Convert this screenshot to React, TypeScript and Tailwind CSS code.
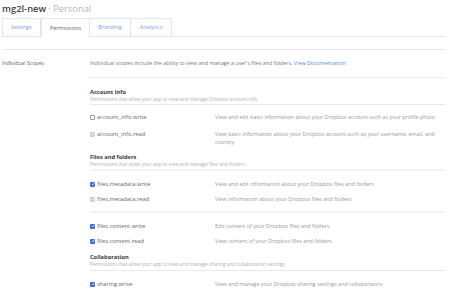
import React from "react";

type Item = { name: string; desc: string[]; state: "off" | "on" | "dis"; mt: string };

function Box({ state }: { state: "off" | "on" | "dis" }) {
  if (state === "off") {
    return <span className="mt-[1.5px] block h-[5px] w-[5px] shrink-0 rounded-[1px] border border-[#9a9a9a] bg-white" />;
  }
  const bg = state === "on" ? "bg-[#3b6fe3]" : "bg-[#cfcfcf]";
  return (
    <span className={`mt-[1.5px] flex h-[5px] w-[5px] shrink-0 items-center justify-center rounded-[1px] ${bg}`}>
      <svg width="4" height="4" viewBox="0 0 10 10">
        <path d="M2 5.2 L4.2 7.4 L8.2 2.6" stroke="white" strokeWidth="1.8" fill="none" />
      </svg>
    </span>
  );
}

function Row({ it }: { it: Item }) {
  return (
    <div className={`flex ${it.mt} leading-[8px]`}>
      <div className="flex w-[125px] shrink-0 items-start gap-[2px]">
        <Box state={it.state} />
        <span className="text-[5.8px] text-[#666]">{it.name}</span>
      </div>
      <div className="text-[5.4px] text-[#999]">
        {it.desc.map((d) => (
          <div key={d}>{d}</div>
        ))}
      </div>
    </div>
  );
}

function Heading({ title, sub, mt, border, pb }: { title: string; sub: string; mt: string; border: string; pb: string }) {
  return (
    <div className={`${mt} ${pb} ${border}`}>
      <div className="h-[7px] text-[5.7px] font-bold leading-[7px] text-[#3a3a3a]">{title}</div>
      <div className="h-[7px] text-[4.8px] leading-[7px] text-[#b0b0b0]">{sub}</div>
    </div>
  );
}

export default function App() {
  return (
    <div
      className="h-[290px] w-[450px] overflow-hidden bg-white pl-[2px] pr-[5px]"
      style={{ fontFamily: '"Open Sans", sans-serif' }}
    >
      <div className="flex h-[18px] items-center text-[9.4px] leading-none">
        <span className="font-semibold text-[#444]">mg2l-new</span>
        <span className="ml-[2px] text-[#b8b8b8]">· Personal</span>
      </div>
      <div className="flex h-[19px] border-b border-[#e8e8e8]">
        <div className="-mb-px flex w-[39px] items-center justify-center border border-[#dde6f5] text-[5.5px] text-[#7d9de2]">Settings</div>
        <div className="-mb-px flex w-[49px] items-center justify-center border-x border-t border-[#e6e6e6] bg-white text-[5.5px] text-[#666]">Permissions</div>
        <div className="-mb-px flex w-[41px] items-center justify-center border border-l-0 border-[#dde6f5] text-[5.5px] text-[#7d9de2]">Branding</div>
        <div className="-mb-px flex w-[41px] items-center justify-center border border-l-0 border-[#dde6f5] text-[5.5px] text-[#7d9de2]">Analytics</div>
      </div>
      <div className="mt-[12px] border-t border-[#e8e8e8]" />
      <div className="flex">
        <div className="flex h-[27px] w-[88px] shrink-0 items-center text-[5.2px] text-[#666]">Individual Scopes</div>
        <div className="flex-1">
          <div className="flex h-[28px] items-center border-b border-[#ececec] text-[5.35px] text-[#777]">
            <span>
              Individual scopes include the ability to view and manage a user&apos;s files and folders.{" "}
              <span className="text-[#5a84e4]">View Documentation</span>
            </span>
          </div>
          <Heading
            title="Account Info"
            sub="Permissions that allow your app to view and manage Dropbox account info"
            mt="mt-[10.5px]"
            pb="pb-[1.5px]"
            border="border-b border-[#e6e6e6]"
          />
          <Row it={{ name: "account_info.write", state: "off", mt: "mt-[8px]", desc: ["View and edit basic information about your Dropbox account such as your profile photo"] }} />
          <Row
            it={{
              name: "account_info.read",
              state: "dis",
              mt: "mt-[9px]",
              desc: ["View basic information about your Dropbox account such as your username, email, and", "country"],
            }}
          />
          <Heading
            title="Files and folders"
            sub="Permissions that allow your app to view and manage files and folders"
            mt="mt-[7.5px]"
            pb="pb-[1.5px]"
            border="border-b-2 border-[#f2f2f2]"
          />
          <Row it={{ name: "files.metadata.write", state: "on", mt: "mt-[9px]", desc: ["View and edit information about your Dropbox files and folders"] }} />
          <Row it={{ name: "files.metadata.read", state: "dis", mt: "mt-[7px]", desc: ["View information about your Dropbox files and folders"] }} />
          <div className="mt-[8px] border-t-2 border-[#f3f3f3]" />
          <Row it={{ name: "files.content.write", state: "on", mt: "mt-[9px]", desc: ["Edit content of your Dropbox files and folders"] }} />
          <Row it={{ name: "files.content.read", state: "on", mt: "mt-[7px]", desc: ["View content of your Dropbox files and folders"] }} />
          <Heading
            title="Collaboration"
            sub="Permissions that allow your app to view and manage sharing and collaboration settings"
            mt="mt-[8.5px]"
            pb="pb-[2.5px]"
            border="border-b border-[#e8e8e8]"
          />
          <Row it={{ name: "sharing.write", state: "on", mt: "mt-[9px]", desc: ["View and manage your Dropbox sharing settings and collaborators"] }} />
        </div>
      </div>
    </div>
  );
}
